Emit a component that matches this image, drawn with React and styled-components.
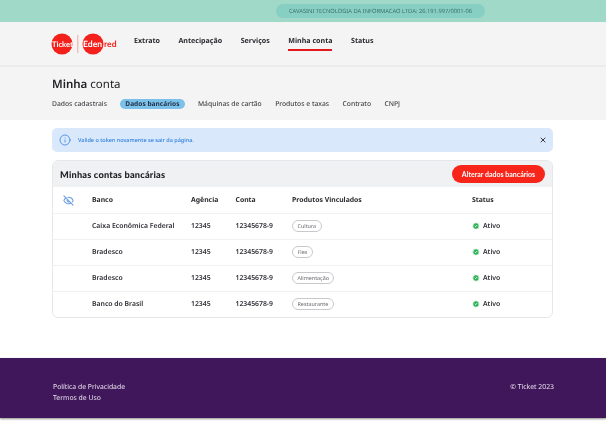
import React from "react";
import styled, { createGlobalStyle } from "styled-components";
import { Info, X, EyeOff, CircleCheck } from "lucide-react";

const GlobalStyle = createGlobalStyle`
  html, body {
    margin: 0;
    padding: 0;
    background: #fff;
    overflow: hidden;
  }
  * { box-sizing: border-box; }
  body {
    font-family: "Noto Sans", "Open Sans", sans-serif;
    color: #26262b;
    text-rendering: geometricPrecision;
  }
`;

const Page = styled.div`
  width: 606px;
  height: 424px;
  display: flex;
  flex-direction: column;
  will-change: transform;
`;

const TopBar = styled.div`
  height: 22px;
  background: #a1d9c9;
  padding: 4px 121px 0 276px;
`;

const CompanyPill = styled.div`
  height: 14px;
  border-radius: 7px;
  background: #87cfc3;
  color: #3c6f6c;
  font-size: 5.75px;
  line-height: 14px;
  text-align: center;
  white-space: nowrap;
`;

const Header = styled.header`
  height: 45px;
  background: #f4f4f4;
  border-bottom: 2px solid #ebebeb;
  padding-left: 51px;
  display: flex;
  align-items: flex-start;
`;

const LogoSvg = styled.svg`
  width: 66px;
  height: 24px;
  margin-top: 10px;
  flex: none;
`;

const Nav = styled.nav`
  display: flex;
  gap: 18.5px;
  margin-left: 17px;
`;

const NavItem = styled.a`
  height: 29px;
  padding-top: 13px;
  font-size: 7.1px;
  line-height: 12px;
  font-weight: 700;
  color: #2b2b30;
  white-space: nowrap;
  border-bottom: 2px solid ${(p) => (p.$active ? "#e3191b" : "transparent")};
`;

const SubHeader = styled.section`
  height: 53px;
  background: #f4f4f4;
  padding: 9px 52px 0;
`;

const PageTitle = styled.h1`
  margin: 0;
  font-size: 11.5px;
  line-height: 18px;
  font-weight: 400;
  color: #222226;
  b { font-weight: 600; }
`;

const Tabs = styled.div`
  display: flex;
  align-items: center;
  margin-top: 5px;
  gap: 13.4px;
`;

const Tab = styled.a`
  height: 10px;
  line-height: 10px;
  font-size: ${(p) => (p.$active ? "6.6px" : "6.75px")};
  color: ${(p) => (p.$active ? "#25344a" : "#45454b")};
  font-weight: ${(p) => (p.$active ? 700 : 500)};
  white-space: nowrap;
  ${(p) =>
    p.$active &&
    `
    background: #7cc1ea;
    border-radius: 5px;
    padding: 0 5px;
  `}
`;

const Main = styled.main`
  flex: 1;
  padding: 8px 53px 0 52px;
`;

const Alert = styled.div`
  height: 24px;
  background: #d9e8fa;
  border-radius: 5px;
  display: flex;
  align-items: center;
  padding: 0 6px 0 7px;
  color: #2c7fe0;
  font-size: 5.5px;
  font-weight: 500;
`;

const AlertText = styled.span`
  flex: 1;
  margin-left: 7px;
`;

const Card = styled.div`
  margin-top: 8px;
  border: 1px solid #e6e7ea;
  border-radius: 6px;
  overflow: hidden;
`;

const CardHeader = styled.div`
  height: 26px;
  background: #f0f1f3;
  display: flex;
  align-items: center;
  justify-content: space-between;
  padding: 0 7px;
`;

const CardTitle = styled.h2`
  margin: 0;
  font-family: "Lato", sans-serif;
  font-size: 9.2px;
  font-weight: 900;
  letter-spacing: 0.2px;
  color: #202024;
`;

const RedButton = styled.button`
  width: 93px;
  height: 18px;
  border: none;
  border-radius: 9px;
  background: #f8251a;
  color: #fff;
  font-family: "Lato", sans-serif;
  font-size: 7px;
  font-weight: 700;
  padding: 0;
`;

const Row = styled.div`
  height: 26px;
  padding-bottom: ${(p) => (p.$first ? "0" : "1px")};
  display: grid;
  grid-template-columns: 39px 99px 44.5px 56.5px 180px 1fr;
  align-items: center;
  font-size: 6.85px;
  font-weight: 600;
  color: #303036;
  border-top: ${(p) => (p.$first ? "none" : "1px solid #f0f1f3")};
  white-space: nowrap;
`;

const HeadCell = styled.div`
  font-weight: 700;
  color: #2b2b30;
`;

const EyeCell = styled.div`
  padding-left: 10px;
  display: flex;
  color: #6f9fe6;
`;

const Chip = styled.span`
  justify-self: start;
  height: 12px;
  line-height: 10px;
  padding: 0 4.5px;
  border: 1px solid #c8c9cc;
  border-radius: 6px;
  font-size: 5.4px;
  font-weight: 400;
  color: #6a6a70;
`;

const StatusCell = styled.div`
  display: flex;
  align-items: center;
  gap: 3px;
`;

const Footer = styled.footer`
  height: 60px;
  background: #41175c;
  color: #e6e0ec;
  font-size: 6.85px;
  line-height: 11.5px;
  padding: 23.5px 52px 0 53px;
  display: flex;
  justify-content: space-between;
  margin-bottom: 6px;
  box-shadow: 0 1px 2px #8b8f88;
`;

const rows = [
  { banco: "Caixa Econômica Federal", produto: "Cultura" },
  { banco: "Bradesco", produto: "Flex" },
  { banco: "Bradesco", produto: "Alimentação" },
  { banco: "Banco do Brasil", produto: "Restaurante" },
];

const navItems = ["Extrato", "Antecipação", "Serviços", "Minha conta", "Status"];
const tabs = ["Dados cadastrais", "Dados bancários", "Máquinas de cartão", "Produtos e taxas", "Contrato", "CNPJ"];

const Logo = () => (
  <LogoSvg viewBox="0 0 66 24">
    <circle cx="11" cy="12" r="10.5" fill="#f4201c" />
    <text x="1" y="14.6" fontFamily="Lato, sans-serif" fontWeight="700" fontSize="7.6" fill="#fff">Ticket</text>
    <rect x="26.5" y="3" width="0.7" height="18" fill="#f08a80" />
    <circle cx="42" cy="12" r="10.5" fill="#f4201c" />
    <text x="32" y="14.6" fontFamily="Lato, sans-serif" fontWeight="700" fontSize="8.6" fill="#fff">Eden</text>
    <text x="53" y="14.6" fontFamily="Lato, sans-serif" fontWeight="700" fontSize="8.6" fill="#f4201c">red</text>
  </LogoSvg>
);

export default function App() {
  return (
    <Page>
      <GlobalStyle />
      <TopBar>
        <CompanyPill>CAVASINI TECNOLOGIA DA INFORMACAO LTDA: 26.191.997/0001-06</CompanyPill>
      </TopBar>
      <Header>
        <Logo />
        <Nav>
          {navItems.map((item) => (
            <NavItem key={item} $active={item === "Minha conta"}>{item}</NavItem>
          ))}
        </Nav>
      </Header>
      <SubHeader>
        <PageTitle><b>Minha</b> conta</PageTitle>
        <Tabs>
          {tabs.map((tab) => (
            <Tab key={tab} $active={tab === "Dados bancários"}>{tab}</Tab>
          ))}
        </Tabs>
      </SubHeader>
      <Main>
        <Alert>
          <Info size={12} strokeWidth={1.5} />
          <AlertText>Valide o token novamente se sair da página.</AlertText>
          <X size={8} strokeWidth={3} color="#3a3a40" />
        </Alert>
        <Card>
          <CardHeader>
            <CardTitle>Minhas contas bancárias</CardTitle>
            <RedButton>Alterar dados bancários</RedButton>
          </CardHeader>
          <Row $first>
            <EyeCell><EyeOff size={11} strokeWidth={2.4} /></EyeCell>
            <HeadCell>Banco</HeadCell>
            <HeadCell>Agência</HeadCell>
            <HeadCell>Conta</HeadCell>
            <HeadCell>Produtos Vinculados</HeadCell>
            <HeadCell>Status</HeadCell>
          </Row>
          {rows.map((row, i) => (
            <Row key={i}>
              <div />
              <div>{row.banco}</div>
              <div>12345</div>
              <div>12345678-9</div>
              <Chip>{row.produto}</Chip>
              <StatusCell>
                <CircleCheck size={8} fill="#2fb35a" color="#fff" strokeWidth={2.5} />
                Ativo
              </StatusCell>
            </Row>
          ))}
        </Card>
      </Main>
      <Footer>
        <div>
          <div>Política de Privacidade</div>
          <div>Termos de Uso</div>
        </div>
        <div>© Ticket 2023</div>
      </Footer>
    </Page>
  );
}
